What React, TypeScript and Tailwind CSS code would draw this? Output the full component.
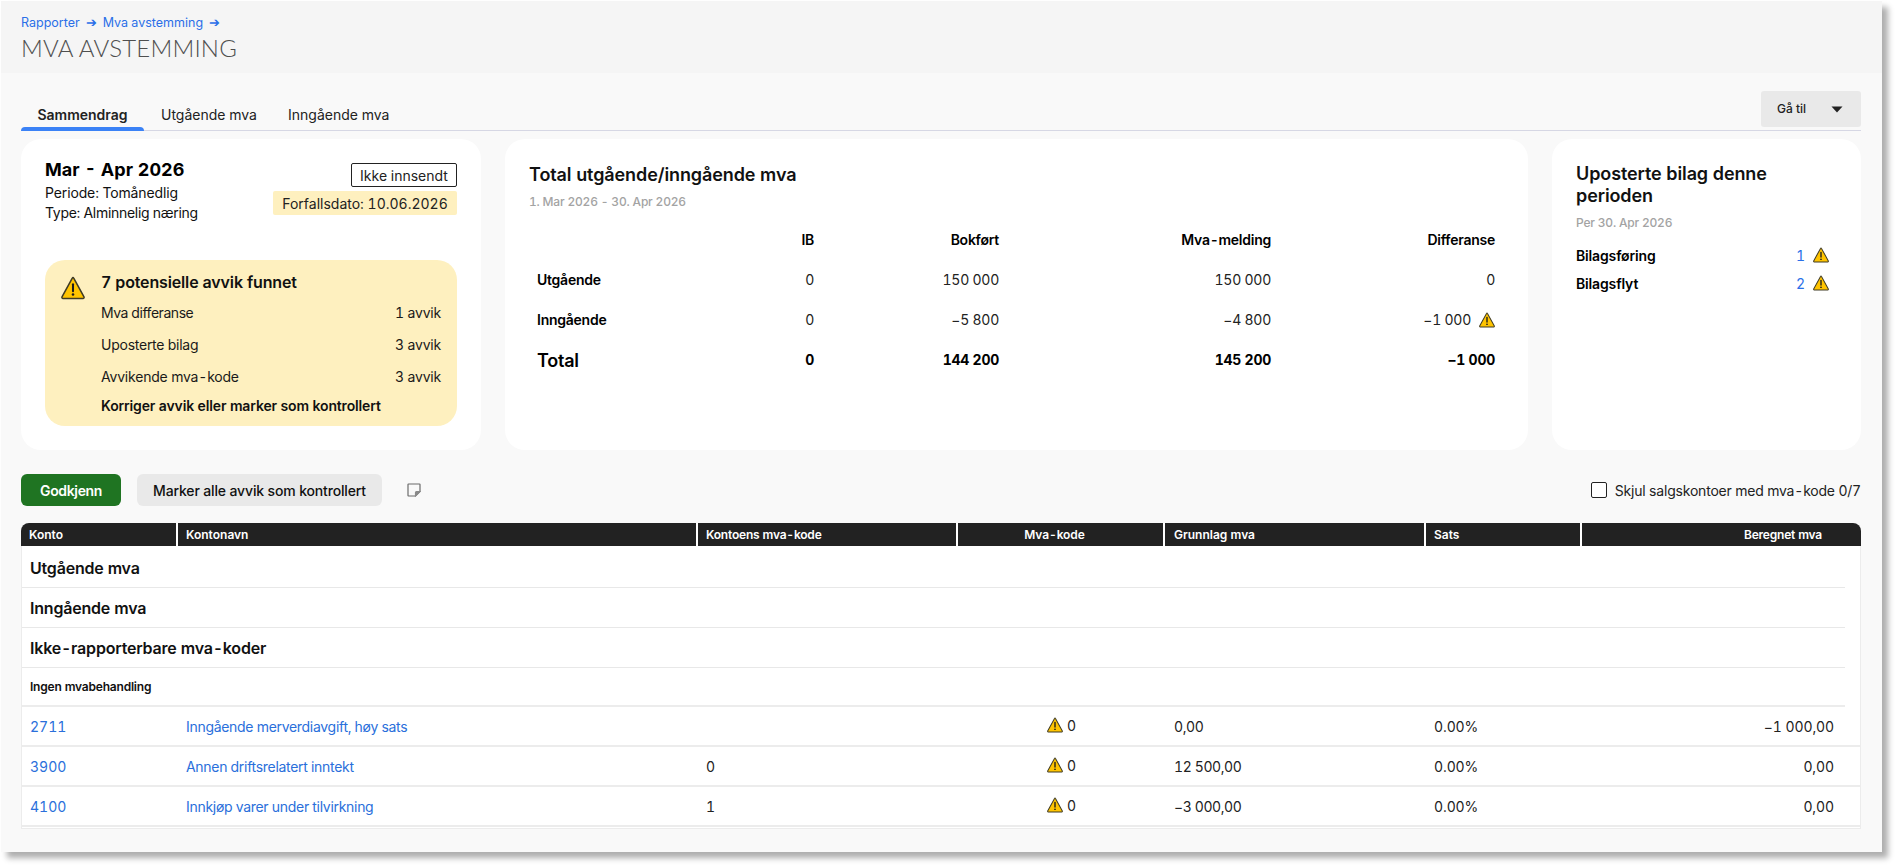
import React from "react";

const Warn = ({ s = 16 }: { s?: number }) => (
  <svg width={s} height={s} viewBox="0.2 1 23.6 23" className="shrink-0">
    <path d="M12 2.2 Q12.4 2.2 12.7 2.8 L22.8 21.2 Q23.2 22.6 22 22.8 H2 Q0.8 22.6 1.2 21.2 L11.3 2.8 Q11.6 2.2 12 2.2 Z" fill="#ffc400" stroke="#3f3b25" strokeWidth="1.5" strokeLinejoin="round" />
    <path d="M12 8.8 V15.6" stroke="#1c1c1c" strokeWidth="2" strokeLinecap="round" />
    <circle cx="12" cy="18.8" r="1.25" fill="#1c1c1c" />
  </svg>
);

const Row = ({ label, v, cls = "" }: { label: React.ReactNode; v: string; cls?: string }) => (
  <div className="flex justify-between h-[32px] items-center text-[14px] text-[#1a1a1a]">
    <span className={cls}>{label}</span>
    <span className="tracking-[-0.2px]">{v}</span>
  </div>
);

const cols = "grid-cols-[156px_520px_258px_209px_261px_156px_263px]";
const hcols = "grid-cols-[157px_520px_260px_207px_261px_156px_278px]";

const HCell = ({ children, cls = "" }: { children?: React.ReactNode; cls?: string }) => (
  <div className={`h-[23px] flex items-center pl-2 border-r-2 border-white last:border-r-0 text-[12px] font-semibold text-white ${cls}`}>
    {children}
  </div>
);

const Section = ({ t }: { t: string }) => (
  <div className="h-[40px] w-[1823px] flex items-center pl-2 border-b border-[#e8e8e8] text-[16px] font-semibold text-[#111] tracking-[-0.2px]">{t}</div>
);

const AcctRow = ({ a, n, k, g, b }: { a: string; n: string; k: string; g: string; b: string }) => (
  <div className={`grid ${cols} h-[40px] items-center border-b-2 border-[#ececec] text-[14px] text-[#222]`}>
    <a className="pl-2 text-[#2a6fdb]">{a}</a>
    <a className="pl-2 text-[#2a6fdb] tracking-[-0.3px]">{n}</a>
    <span className="pl-2">{k}</span>
    <span className="flex justify-center items-center gap-1 -mt-[2px] ml-[2px]">
      <Warn s={16} />
      <span>0</span>
    </span>
    <span className="pl-[9px] tracking-[-0.4px]">{g}</span>
    <span className="pl-2 tracking-[-0.1px]">0.00%</span>
    <span className="pr-[11px] text-right tracking-[-0.1px]">{b}</span>
  </div>
);

export default function App() {
  return (
    <div className="w-[1895px] h-[865px] bg-white pt-px pl-px overflow-hidden tabular-nums [font-family:Inter,sans-serif]">
      <div className="w-[1881px] h-[851px] bg-[#f9f9f9] shadow-[6px_6px_6px_rgba(0,0,0,0.32)]">
        <header className="h-[72px] bg-[#f5f5f5] pl-5 pt-[15px]">
          <div className="flex items-center gap-[6px] h-[15px] text-[12.5px] text-[#2a6fe8]">
            <span>Rapporter</span><span>➔</span><span>Mva avstemming</span><span>➔</span>
          </div>
          <h1 className="mt-[2px] text-[24px] leading-[30px] font-light tracking-[0.2px] text-[#4f4f4f] [font-family:Lato,sans-serif]">MVA AVSTEMMING</h1>
        </header>

        <main className="pl-5 pr-[21px]">
          <div className="h-[58px] flex items-end justify-between border-b border-[#d6d7e4]">
            <div className="flex text-[14px] text-[#222]">
              <div className="relative w-[123px] h-[32px] flex items-center justify-center font-semibold">
                Sammendrag
                <span className="absolute left-0 right-0 -bottom-px h-[4px] rounded-t bg-[#3b82f6]" />
              </div>
              <div className="w-[131px] h-[32px] pl-[17px] flex items-center">Utgående mva</div>
              <div className="h-[32px] flex items-center pl-[13px]">Inngående mva</div>
            </div>
            <div className="mb-[3px] w-[100px] h-[36px] rounded-[3px] bg-[#e9e9e9] flex items-center pl-4 text-[12px] font-medium text-[#222]">
              Gå til
              <svg width="12" height="7" viewBox="0 0 12 7" className="ml-[25px]"><path d="M0.5 0.5 H11.5 L6 6.5 Z" fill="#222" /></svg>
            </div>
          </div>

          <div className="mt-2 flex gap-6 h-[311px]">
            <section className="w-[460px] bg-white rounded-[20px] px-6 pt-[19px]">
              <div className="flex justify-between h-[102px]">
                <div>
                  <div className="text-[18px] leading-[24px] font-bold text-black">Mar - Apr 2026</div>
                  <div className="text-[14px] leading-[20px] mt-[1px] text-[#111] tracking-[-0.13px]">Periode: Tomånedlig</div>
                  <div className="text-[14px] leading-[20px] text-[#111] tracking-[-0.3px]">Type: Alminnelig næring</div>
                </div>
                <div className="flex flex-col items-end mt-[5px]">
                  <div className="h-[24px] w-[106px] border border-[#222] rounded-[2px] flex items-center justify-center text-[14px] text-[#222]">Ikke innsendt</div>
                  <div className="mt-1 h-[24px] w-[184px] bg-[#fef0bf] rounded-[2px] flex items-center justify-center text-[14px] text-[#222]">Forfallsdato: 10.06.2026</div>
                </div>
              </div>
              <div className="h-[166px] bg-[#fef0bf] rounded-[20px] pl-4 pr-4 pt-[10px] flex gap-4">
                <div className="mt-[6px]"><Warn s={24} /></div>
                <div className="flex-1">
                  <div className="text-[16px] leading-[24px] font-semibold text-[#111] tracking-[-0.15px]">7 potensielle avvik funnet</div>
                  <div className="mt-[2px]">
                    <Row label="Mva differanse" v="1 avvik" cls="tracking-[-0.45px]" />
                    <Row label="Uposterte bilag" v="3 avvik" cls="tracking-[-0.25px]" />
                    <Row label="Avvikende mva-kode" v="3 avvik" cls="tracking-[-0.2px]" />
                  </div>
                  <div className="mt-[4px] text-[14px] leading-[20px] font-semibold text-[#111] tracking-[-0.15px]">Korriger avvik eller marker som kontrollert</div>
                </div>
              </div>
            </section>

            <section className="w-[1023px] bg-white rounded-[20px] pl-6 pt-6">
              <div className="text-[18px] leading-[24px] font-semibold text-[#111] tracking-[-0.1px]">Total utgående/inngående mva</div>
              <div className="mt-[7px] text-[12px] leading-[16px] font-medium text-[#a3a3a3] tracking-[-0.2px]">1. Mar 2026 - 30. Apr 2026</div>
              <table className="mt-[9px] w-[966px] table-fixed text-[14px] text-[#222] tracking-[-0.25px]">
                <colgroup>
                  <col className="w-[285px]" /><col className="w-[185px]" /><col className="w-[272px]" /><col className="w-[224px]" />
                </colgroup>
                <tbody>
                  <tr className="h-[40px] text-right font-semibold text-black">
                    <td>IB</td><td>Bokført</td><td>Mva-melding</td><td>Differanse</td>
                  </tr>
                  <tr className="h-[40px] text-right">
                    <td className="relative"><span className="absolute left-2 top-[10px] font-semibold text-black">Utgående</span>0</td><td>150 000</td><td>150 000</td><td>0</td>
                  </tr>
                  <tr className="h-[40px] text-right">
                    <td className="relative"><span className="absolute left-2 top-[10px] font-semibold text-black">Inngående</span>0</td><td>−5 800</td><td>−4 800</td>
                    <td><span className="inline-flex items-center gap-2 align-middle">−1 000 <Warn s={16} /></span></td>
                  </tr>
                  <tr className="h-[40px] text-right font-bold text-black">
                    <td className="relative"><span className="absolute left-2 top-[8px] text-[18px] font-semibold">Total</span>0</td><td>144 200</td><td>145 200</td><td>−1 000</td>
                  </tr>
                </tbody>
              </table>
            </section>

            <section className="w-[309px] bg-white rounded-[20px] pl-6 pr-3 pt-6">
              <div className="w-[210px] text-[18px] leading-[22px] font-semibold text-[#111] tracking-[-0.1px]">Uposterte bilag denne perioden</div>
              <div className="mt-2 text-[12px] leading-[16px] font-medium text-[#a3a3a3] tracking-[-0.2px]">Per 30. Apr 2026</div>
              <div className="mt-[10px] text-[14px]">
                <div className="flex items-center h-[28px] justify-between pr-[20px] font-semibold text-black tracking-[-0.15px]">Bilagsføring<span className="flex items-center gap-2 font-normal text-[#2a6fe8]">1<Warn s={16} /></span></div>
                <div className="flex items-center h-[28px] justify-between pr-[20px] font-semibold text-black tracking-[-0.15px]">Bilagsflyt<span className="flex items-center gap-2 font-normal text-[#2a6fe8]">2<Warn s={16} /></span></div>
              </div>
            </section>
          </div>

          <div className="mt-6 h-[32px] flex items-center">
            <button className="w-[100px] h-[32px] rounded-[6px] bg-[#1f7422] text-white text-[14px] font-semibold tracking-[-0.35px]">Godkjenn</button>
            <button className="ml-[16px] w-[245px] h-[32px] rounded-[6px] bg-[#e9e9e9] text-[#111] text-[14px] font-medium tracking-[-0.15px]">Marker alle avvik som kontrollert</button>
            <svg width="14" height="14" viewBox="0 0 14 14" className="ml-[25px]" fill="none" stroke="#6b6b6b" strokeWidth="1.2">
              <path d="M1 1.5 Q1 1 1.5 1 H12.5 Q13 1 13 1.5 V8.5 L8.5 13 H1.5 Q1 13 1 12.5 Z" />
              <path d="M13 8.5 H9.5 Q8.5 8.5 8.5 9.5 V13 Z" fill="#8a8a8a" stroke="#8a8a8a" />
            </svg>
            <label className="ml-auto flex items-center gap-2 text-[14px] text-[#222]">
              <span className="w-4 h-4 rounded-[2px] border border-[#222] bg-white" />
              <span className="tracking-[-0.2px]">Skjul salgskontoer med mva-kode 0/7</span>
            </label>
          </div>

          <div className="mt-[17px] w-[1840px]">
            <div className={`grid ${hcols} bg-[#222222] rounded-t-[8px]`}>
              <HCell>Konto</HCell>
              <HCell>Kontonavn</HCell>
              <HCell cls="tracking-[-0.2px]">Kontoens mva-kode</HCell>
              <HCell cls="justify-center pr-5 tracking-[-0.1px]">Mva-kode</HCell>
              <HCell cls="pl-[9px]">Grunnlag mva</HCell>
              <HCell>Sats</HCell>
              <HCell cls="justify-end pr-[38px] tracking-[-0.2px]">Beregnet mva</HCell>
            </div>
            <div className="bg-white border border-t-0 border-[#ececec] h-[283px] pt-[2px]">
              <Section t="Utgående mva" />
              <Section t="Inngående mva" />
              <Section t="Ikke-rapporterbare mva-koder" />
              <div className="h-[39px] w-[1823px] flex items-center pl-2 border-b-2 border-[#ececec] text-[12px] font-semibold text-[#111] tracking-[-0.2px]">Ingen mvabehandling</div>
              <AcctRow a="2711" n="Inngående merverdiavgift, høy sats" k="" g="0,00" b="−1 000,00" />
              <AcctRow a="3900" n="Annen driftsrelatert inntekt" k="0" g="12 500,00" b="0,00" />
              <AcctRow a="4100" n="Innkjøp varer under tilvirkning" k="1" g="−3 000,00" b="0,00" />
            </div>
          </div>
        </main>
      </div>
    </div>
  );
}
